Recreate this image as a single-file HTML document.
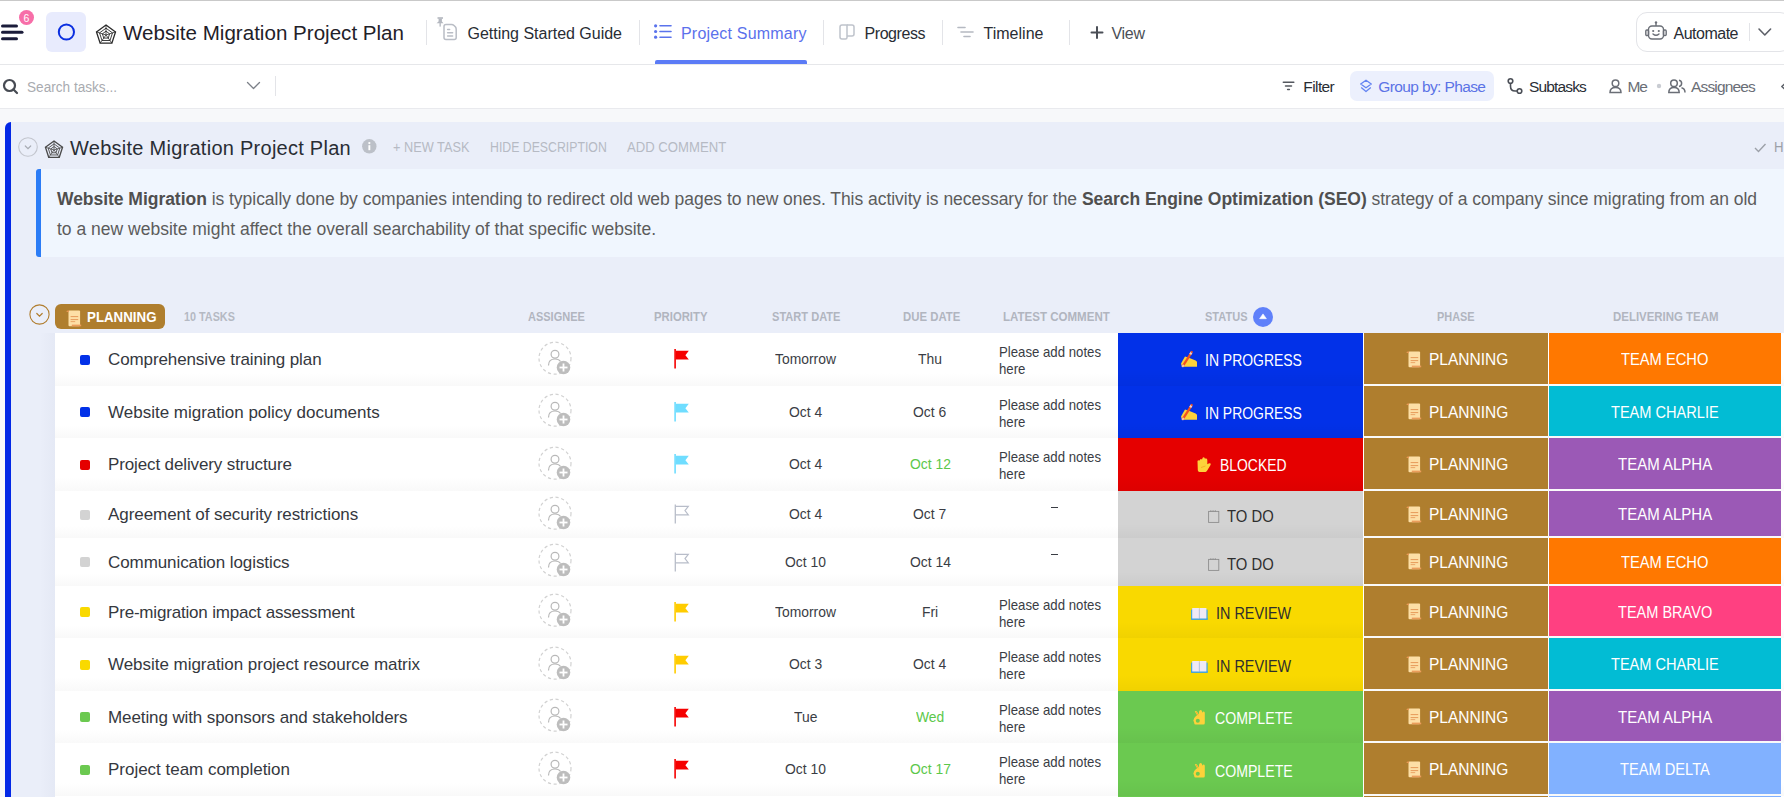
<!DOCTYPE html>
<html><head><meta charset="utf-8"><title>Website Migration Project Plan</title>
<style>
html,body{margin:0;padding:0;}
body{width:1784px;height:797px;overflow:hidden;position:relative;background:#fff;font-family:"Liberation Sans", sans-serif;}
svg{overflow:visible}
</style></head><body>
<div style="position:absolute;left:0px;top:0px;width:1784px;height:1px;background:#c9c9c9;"></div>
<div style="position:absolute;left:0px;top:64px;width:1784px;height:1px;background:#e6e7ea;"></div>
<svg style="position:absolute;left:0px;top:18px;" width="26" height="26" viewBox="0 0 26 26"><g stroke="#1b1c3a" stroke-width="3" stroke-linecap="round">
<line x1="2.5" y1="8" x2="16.5" y2="8"/><line x1="2.5" y1="14.2" x2="22" y2="14.2"/><line x1="2.5" y1="20.8" x2="16.5" y2="20.8"/></g></svg>
<svg style="position:absolute;left:19px;top:10px;" width="16" height="16" viewBox="0 0 16 16"><circle cx="7.5" cy="7.5" r="7.5" fill="#f76ea8"/><text x="7.5" y="11.5" font-size="10.5" font-family="Liberation Sans" fill="#fff" text-anchor="middle">6</text></svg>
<div style="position:absolute;left:46px;top:12px;width:40px;height:40px;background:#e8ebfd;border-radius:6px;"></div>
<svg style="position:absolute;left:57px;top:23px;" width="19" height="19" viewBox="0 0 19 19"><circle cx="9.4" cy="9" r="7.6" fill="none" stroke="#0a2ee0" stroke-width="2"/></svg>
<svg style="position:absolute;left:96px;top:23.5px;" width="20" height="22" viewBox="0 0 20 22"><polygon points="10.00,1.00 19.51,7.91 15.88,19.09 4.12,19.09 0.49,7.91" fill="none" stroke="#2a2a2a" stroke-width="1.3"/><polygon points="10.00,4.20 16.47,8.90 14.00,16.50 6.00,16.50 3.53,8.90" fill="none" stroke="#2a2a2a" stroke-width="0.9"/><polygon points="10.00,7.20 13.61,9.83 12.23,14.07 7.77,14.07 6.39,9.83" fill="none" stroke="#2a2a2a" stroke-width="0.9"/><line x1="10.0" y1="11.0" x2="10.00" y2="1.00" stroke="#2a2a2a" stroke-width="0.8"/><line x1="10.0" y1="11.0" x2="19.51" y2="7.91" stroke="#2a2a2a" stroke-width="0.8"/><line x1="10.0" y1="11.0" x2="15.88" y2="19.09" stroke="#2a2a2a" stroke-width="0.8"/><line x1="10.0" y1="11.0" x2="4.12" y2="19.09" stroke="#2a2a2a" stroke-width="0.8"/><line x1="10.0" y1="11.0" x2="0.49" y2="7.91" stroke="#2a2a2a" stroke-width="0.8"/></svg>
<div style="position:absolute;left:426px;top:20px;width:1px;height:25px;background:#e3e4e8;"></div>
<div style="position:absolute;left:639px;top:20px;width:1px;height:25px;background:#e3e4e8;"></div>
<div style="position:absolute;left:823px;top:20px;width:1px;height:25px;background:#e3e4e8;"></div>
<div style="position:absolute;left:942px;top:20px;width:1px;height:25px;background:#e3e4e8;"></div>
<div style="position:absolute;left:1069px;top:20px;width:1px;height:25px;background:#e3e4e8;"></div>
<svg style="position:absolute;left:436px;top:17px;" width="22" height="24" viewBox="0 0 22 24"><g fill="none" stroke="#b9bdc5" stroke-width="1.5" stroke-linecap="round">
<path d="M10 7.5 H15.5 Q17 7.5 18 8.5 L19.5 10 Q20.2 11 20.2 12.5 V20.5 Q20.2 22.5 18.2 22.5 H10 Q8 22.5 8 20.5 V9.5 Q8 7.5 10 7.5 Z"/>
<line x1="11.6" y1="12.4" x2="13.6" y2="12.4"/><line x1="11.6" y1="15.7" x2="16.6" y2="15.7"/><line x1="11.6" y1="19" x2="16.6" y2="19"/></g>
<g fill="#b3b7bf"><rect x="1.5" y="0.2" width="5.5" height="1.6"/><rect x="2.6" y="1.5" width="3.3" height="3.5"/><path d="M0.5 6.3 L2.6 4.5 H5.9 L7.5 6.3 Z"/><rect x="3.5" y="6" width="1.3" height="3.6"/></g></svg>
<svg style="position:absolute;left:654px;top:24px;" width="19" height="16" viewBox="0 0 19 16"><g fill="#5a73ec"><circle cx="1.6" cy="1.8" r="1.6"/><circle cx="1.6" cy="7.5" r="1.6"/><circle cx="1.6" cy="13.2" r="1.6"/></g>
<g stroke="#5a73ec" stroke-width="1.6" stroke-linecap="round"><line x1="6" y1="1.8" x2="17" y2="1.8"/><line x1="6" y1="7.5" x2="17" y2="7.5"/><line x1="6" y1="13.2" x2="17" y2="13.2"/></g></svg>
<div style="position:absolute;left:655px;top:60px;width:152px;height:4px;background:#5b7bf6;border-radius:2px 2px 0 0;"></div>
<svg style="position:absolute;left:839px;top:24px;" width="17" height="17" viewBox="0 0 17 17"><g fill="none" stroke="#bfc3cb" stroke-width="1.5"><path d="M3 1 H8 V13.5 Q8 15 6.5 15 H3 Q1 15 1 13 V3 Q1 1 3 1 Z"/><path d="M8 1 H13 Q15 1 15 3 V10 Q15 12 13 12 H8"/></g></svg>
<svg style="position:absolute;left:957px;top:26px;" width="18" height="13" viewBox="0 0 18 13"><g stroke="#b5b9c1" stroke-width="1.6" stroke-linecap="round"><line x1="1" y1="1.5" x2="8" y2="1.5"/><line x1="4" y1="6" x2="16" y2="6"/><line x1="7" y1="10.5" x2="13" y2="10.5"/></g></svg>
<svg style="position:absolute;left:1090px;top:26px;" width="14" height="14" viewBox="0 0 14 14"><g stroke="#4b4f57" stroke-width="2" stroke-linecap="round"><line x1="7" y1="1" x2="7" y2="12"/><line x1="1.5" y1="6.5" x2="12.5" y2="6.5"/></g></svg>
<div style="position:absolute;left:1635.5px;top:12px;width:155px;height:39.5px;background:#fff;border:1px solid #e3e4e8;border-radius:11px;box-sizing:border-box;"></div>
<svg style="position:absolute;left:1645px;top:21px;" width="22" height="20" viewBox="0 0 22 20"><g fill="none" stroke="#6b6f77" stroke-width="1.4">
<rect x="3.5" y="5" width="15" height="13" rx="3.5"/><line x1="11" y1="2" x2="11" y2="5"/><rect x="0.8" y="9" width="2.7" height="5.5" rx="1"/><rect x="18.5" y="9" width="2.7" height="5.5" rx="1"/>
<path d="M8 13 q3 2.6 6 0" stroke-linecap="round"/></g><g fill="#6b6f77"><circle cx="11" cy="1.4" r="1.2"/><circle cx="8.2" cy="10" r="1.1"/><circle cx="13.8" cy="10" r="1.1"/></g></svg>
<div style="position:absolute;left:1749px;top:23px;width:1px;height:18px;background:#e3e4e8;"></div>
<svg style="position:absolute;left:1758px;top:28px;" width="14" height="9" viewBox="0 0 14 9"><path d="M1 1 L6.8 7 L12.6 1" fill="none" stroke="#5d6068" stroke-width="1.6" stroke-linecap="round" stroke-linejoin="round"/></svg>
<div style="position:absolute;left:0px;top:108px;width:1784px;height:1px;background:#e9eaee;"></div>
<svg style="position:absolute;left:2px;top:78px;" width="17" height="17" viewBox="0 0 17 17"><g fill="none" stroke="#474b53" stroke-width="2.2"><circle cx="7.5" cy="7.5" r="5.5"/><line x1="11.5" y1="11.5" x2="15" y2="15" stroke-linecap="round"/></g></svg>
<svg style="position:absolute;left:246px;top:81px;" width="15" height="10" viewBox="0 0 15 10"><path d="M1.5 1.5 L7.5 7.5 L13.5 1.5" fill="none" stroke="#7c8088" stroke-width="1.3" stroke-linecap="round" stroke-linejoin="round"/></svg>
<div style="position:absolute;left:275px;top:76px;width:1px;height:20px;background:#e3e4e8;"></div>
<svg style="position:absolute;left:1282px;top:80px;" width="13" height="12" viewBox="0 0 13 12"><g stroke="#54585f" stroke-width="1.5" stroke-linecap="round"><line x1="1.3" y1="2.3" x2="11.8" y2="2.3"/><line x1="3.5" y1="6" x2="9.5" y2="6"/><line x1="5.6" y1="9.6" x2="7.4" y2="9.6"/></g></svg>
<div style="position:absolute;left:1350px;top:71px;width:144px;height:30px;background:#ecf0fd;border-radius:7px;"></div>
<svg style="position:absolute;left:1359px;top:79px;" width="14" height="15" viewBox="0 0 14 15"><g fill="none" stroke="#6484f2" stroke-width="1.3" stroke-linejoin="round"><path d="M7 1.2 L12.3 5 L7 8.8 L1.7 5 Z"/><path d="M2.2 8.6 L7 12.6 L11.8 8.6"/></g></svg>
<svg style="position:absolute;left:1507px;top:78px;" width="17" height="17" viewBox="0 0 17 17"><g fill="none" stroke="#4b4f57" stroke-width="1.6"><circle cx="3.5" cy="3" r="2.3"/><circle cx="12.5" cy="13" r="2.3"/><path d="M3.5 5.3 v3 q0 4.7 4.7 4.7 h2"/></g></svg>
<svg style="position:absolute;left:1609px;top:79px;" width="13" height="15" viewBox="0 0 13 15"><g fill="none" stroke="#6a6e76" stroke-width="1.5"><circle cx="6.5" cy="4.3" r="3.3"/><path d="M1 13.5 q0 -5 5.5 -5 q5.5 0 5.5 5 z"/></g></svg>
<svg style="position:absolute;left:1655.5px;top:83px;" width="6" height="6" viewBox="0 0 6 6"><circle cx="3" cy="3" r="2.2" fill="#c9ccd2"/></svg>
<svg style="position:absolute;left:1668px;top:79px;" width="18" height="15" viewBox="0 0 18 15"><g fill="none" stroke="#6a6e76" stroke-width="1.5"><circle cx="6" cy="4.3" r="3.3"/><path d="M0.8 13.5 q0 -5 5.2 -5 q5.2 0 5.2 5 z"/><path d="M11 1.2 a3.2 3.2 0 0 1 0 6.3 M13.5 8.8 q3.5 0.8 3.5 4.7"/></g></svg>
<svg style="position:absolute;left:1780px;top:82px;" width="8" height="10" viewBox="0 0 8 10"><path d="M5.5 1 L1.8 4.5 L5.5 8" fill="none" stroke="#5d6168" stroke-width="1.5" stroke-linejoin="round"/></svg>
<div style="position:absolute;left:0px;top:109px;width:1784px;height:688px;background:#f7f8fa;"></div>
<div style="position:absolute;left:5px;top:122px;width:1779px;height:675px;background:#eaeef9;border-top-left-radius:6px;"></div>
<div style="position:absolute;left:5px;top:122px;width:6px;height:675px;background:#0328e6;border-top-left-radius:6px;"></div>
<svg style="position:absolute;left:18px;top:137px;" width="21" height="21" viewBox="0 0 21 21"><circle cx="10" cy="10" r="9.3" fill="none" stroke="#c3c6ce" stroke-width="1.1"/><path d="M7.3 9 L10 11.6 L12.7 9" fill="none" stroke="#a8acb4" stroke-width="1.2" stroke-linecap="round"/></svg>
<svg style="position:absolute;left:45px;top:139.5px;" width="18" height="20" viewBox="0 0 18 20"><polygon points="9.00,1.00 17.56,7.22 14.29,17.28 3.71,17.28 0.44,7.22" fill="none" stroke="#4a4a4a" stroke-width="1.3"/><polygon points="9.00,3.88 14.82,8.11 12.60,14.95 5.40,14.95 3.18,8.11" fill="none" stroke="#4a4a4a" stroke-width="0.9"/><polygon points="9.00,6.58 12.25,8.94 11.01,12.77 6.99,12.77 5.75,8.94" fill="none" stroke="#4a4a4a" stroke-width="0.9"/><line x1="9.0" y1="10.0" x2="9.00" y2="1.00" stroke="#4a4a4a" stroke-width="0.8"/><line x1="9.0" y1="10.0" x2="17.56" y2="7.22" stroke="#4a4a4a" stroke-width="0.8"/><line x1="9.0" y1="10.0" x2="14.29" y2="17.28" stroke="#4a4a4a" stroke-width="0.8"/><line x1="9.0" y1="10.0" x2="3.71" y2="17.28" stroke="#4a4a4a" stroke-width="0.8"/><line x1="9.0" y1="10.0" x2="0.44" y2="7.22" stroke="#4a4a4a" stroke-width="0.8"/></svg>
<svg style="position:absolute;left:362px;top:139px;" width="15" height="15" viewBox="0 0 15 15"><circle cx="7.3" cy="7.3" r="7.2" fill="#bcc0c8"/><rect x="6.4" y="6.2" width="1.9" height="5" fill="#fff"/><circle cx="7.35" cy="4.1" r="1.15" fill="#fff"/></svg>
<svg style="position:absolute;left:1754px;top:143px;" width="13" height="10" viewBox="0 0 13 10"><path d="M1 5 L4.5 8.5 L11.5 1" fill="none" stroke="#9ca0a8" stroke-width="1.4"/></svg>
<div style="position:absolute;left:36px;top:169px;width:1748px;height:88px;background:#f0f6fe;border-radius:3px 0 0 3px;"></div>
<div style="position:absolute;left:36px;top:169px;width:5px;height:88px;background:#2b7cf6;border-radius:3px 0 0 3px;"></div>
<svg style="position:absolute;left:29px;top:304.3px;" width="22" height="22" viewBox="0 0 22 22"><circle cx="10.5" cy="10.5" r="9.6" fill="none" stroke="#b07d2e" stroke-width="1.1"/><path d="M7.8 9.5 L10.5 12.2 L13.2 9.5" fill="none" stroke="#b07d2e" stroke-width="1.2" stroke-linecap="round"/></svg>
<div style="position:absolute;left:55px;top:304px;width:110px;height:24.5px;background:#af7e2e;border-radius:6px;"></div>
<svg style="position:absolute;left:65.5px;top:309.5px;" width="16" height="17" viewBox="0 0 16 17"><rect x="2.5" y="0.6" width="11.6" height="15.6" rx="1" fill="#fddfa6"/><path d="M0.2 1.6 Q1.2 0.2 2.8 0.6 V2.2 Z" fill="#ee9a58"/><rect x="5.8" y="14.6" width="9.4" height="1.7" fill="#eb9d5c"/><g fill="#e8a060"><rect x="4.6" y="6" width="7.6" height="1.1"/><rect x="4.6" y="9" width="7.6" height="1.1"/><rect x="4.6" y="11.2" width="4.6" height="0.9"/></g></svg>
<svg style="position:absolute;left:1253px;top:306.5px;" width="21" height="21" viewBox="0 0 21 21"><circle cx="10" cy="10" r="10" fill="#5f80fa"/><path d="M6.6 11.7 L10 6.9 L13.4 11.7 Z" fill="#fff" stroke="#fff" stroke-width="0.6" stroke-linejoin="round"/></svg>
<div style="position:absolute;left:40px;top:333px;width:15px;height:464px;background:linear-gradient(to right, rgba(60,70,120,0) 0%, rgba(60,70,120,0.03) 100%);"></div>
<div style="position:absolute;left:55px;top:333px;width:1729px;height:53px;background:linear-gradient(#fff 0%, #fff 75%, #f9f9f9 100%);"></div>
<div style="position:absolute;left:80px;top:354.5px;width:10px;height:10px;background:#0231e8;border-radius:2px;"></div>
<svg style="position:absolute;left:538px;top:340.5px;" width="36" height="36" viewBox="0 0 36 36"><circle cx="17" cy="17.2" r="16" fill="none" stroke="#d2d2d2" stroke-width="1.2" stroke-dasharray="3.2 2.6"/>
<circle cx="17" cy="13.2" r="3.9" fill="none" stroke="#b8b8b8" stroke-width="1.2"/>
<path d="M10.5 24.5 q0 -6.5 6.5 -6.5 q4 0 5.5 2.5" fill="none" stroke="#b8b8b8" stroke-width="1.2"/>
<circle cx="25.5" cy="26.5" r="6.8" fill="#bdbdbd"/><g stroke="#fff" stroke-width="1.8"><line x1="25.5" y1="22.5" x2="25.5" y2="30.5"/><line x1="21.5" y1="26.5" x2="29.5" y2="26.5"/></g></svg>
<svg style="position:absolute;left:673.5px;top:349.0px;" width="16" height="21" viewBox="0 0 16 21"><rect x="0.3" y="0" width="1.6" height="19.5" fill="#f50000"/><path d="M1.8 1.8 H14.8 L11.4 6.2 L14.8 10.6 H1.8 Z" fill="#f50000"/></svg>
<div style="position:absolute;left:1118px;top:333px;width:245px;height:53px;background:linear-gradient(rgba(0,0,0,0) 70%, rgba(0,0,0,0.035) 100%), #0231e8;"></div>
<div style="position:absolute;left:1364px;top:333px;width:184px;height:51px;background:#af7e2e;"></div>
<div style="position:absolute;left:1549px;top:333px;width:232px;height:51px;background:#ff7800;"></div>
<svg style="position:absolute;left:1176px;top:348.0px;" width="23" height="20" viewBox="0 0 23 20"><path d="M5 15.4 L9 8.4 L13.5 10 L19.6 12.6 L21 13.8 V18.8 H6 Z" fill="#fdd23a"/><path d="M6.8 18.2 L14.8 5.6" stroke="#f4511e" stroke-width="2.3" stroke-linecap="butt"/><path d="M14.2 6.4 L15.6 4.2" stroke="#f1d2c8" stroke-width="2.3"/><path d="M15.3 4.6 L16.2 3.3" stroke="#f4511e" stroke-width="2"/><path d="M6.2 18.8 l1.6 -2" stroke="#f6c4b0" stroke-width="2"/></svg>
<svg style="position:absolute;left:1406px;top:350.6px;" width="16" height="17" viewBox="0 0 16 17"><rect x="2.5" y="0.6" width="11.6" height="15.6" rx="1" fill="#fddfa6"/><path d="M0.2 1.6 Q1.2 0.2 2.8 0.6 V2.2 Z" fill="#ee9a58"/><rect x="5.8" y="14.6" width="9.4" height="1.7" fill="#eb9d5c"/><g fill="#e8a060"><rect x="4.6" y="6" width="7.6" height="1.1"/><rect x="4.6" y="9" width="7.6" height="1.1"/><rect x="4.6" y="11.2" width="4.6" height="0.9"/></g></svg>
<div style="position:absolute;left:55px;top:386px;width:1729px;height:52px;background:linear-gradient(#fff 0%, #fff 75%, #f9f9f9 100%);"></div>
<div style="position:absolute;left:80px;top:407.0px;width:10px;height:10px;background:#0231e8;border-radius:2px;"></div>
<svg style="position:absolute;left:538px;top:393.0px;" width="36" height="36" viewBox="0 0 36 36"><circle cx="17" cy="17.2" r="16" fill="none" stroke="#d2d2d2" stroke-width="1.2" stroke-dasharray="3.2 2.6"/>
<circle cx="17" cy="13.2" r="3.9" fill="none" stroke="#b8b8b8" stroke-width="1.2"/>
<path d="M10.5 24.5 q0 -6.5 6.5 -6.5 q4 0 5.5 2.5" fill="none" stroke="#b8b8b8" stroke-width="1.2"/>
<circle cx="25.5" cy="26.5" r="6.8" fill="#bdbdbd"/><g stroke="#fff" stroke-width="1.8"><line x1="25.5" y1="22.5" x2="25.5" y2="30.5"/><line x1="21.5" y1="26.5" x2="29.5" y2="26.5"/></g></svg>
<svg style="position:absolute;left:673.5px;top:401.5px;" width="16" height="21" viewBox="0 0 16 21"><rect x="0.3" y="0" width="1.6" height="19.5" fill="#6fddff"/><path d="M1.8 1.8 H14.8 L11.4 6.2 L14.8 10.6 H1.8 Z" fill="#6fddff"/></svg>
<div style="position:absolute;left:1118px;top:386px;width:245px;height:52px;background:linear-gradient(rgba(0,0,0,0) 70%, rgba(0,0,0,0.035) 100%), #0231e8;"></div>
<div style="position:absolute;left:1364px;top:386px;width:184px;height:50px;background:#af7e2e;"></div>
<div style="position:absolute;left:1549px;top:386px;width:232px;height:50px;background:#02bcd4;"></div>
<svg style="position:absolute;left:1176px;top:400.5px;" width="23" height="20" viewBox="0 0 23 20"><path d="M5 15.4 L9 8.4 L13.5 10 L19.6 12.6 L21 13.8 V18.8 H6 Z" fill="#fdd23a"/><path d="M6.8 18.2 L14.8 5.6" stroke="#f4511e" stroke-width="2.3" stroke-linecap="butt"/><path d="M14.2 6.4 L15.6 4.2" stroke="#f1d2c8" stroke-width="2.3"/><path d="M15.3 4.6 L16.2 3.3" stroke="#f4511e" stroke-width="2"/><path d="M6.2 18.8 l1.6 -2" stroke="#f6c4b0" stroke-width="2"/></svg>
<svg style="position:absolute;left:1406px;top:403.1px;" width="16" height="17" viewBox="0 0 16 17"><rect x="2.5" y="0.6" width="11.6" height="15.6" rx="1" fill="#fddfa6"/><path d="M0.2 1.6 Q1.2 0.2 2.8 0.6 V2.2 Z" fill="#ee9a58"/><rect x="5.8" y="14.6" width="9.4" height="1.7" fill="#eb9d5c"/><g fill="#e8a060"><rect x="4.6" y="6" width="7.6" height="1.1"/><rect x="4.6" y="9" width="7.6" height="1.1"/><rect x="4.6" y="11.2" width="4.6" height="0.9"/></g></svg>
<div style="position:absolute;left:55px;top:438px;width:1729px;height:53px;background:linear-gradient(#fff 0%, #fff 75%, #f9f9f9 100%);"></div>
<div style="position:absolute;left:80px;top:459.5px;width:10px;height:10px;background:#e50000;border-radius:2px;"></div>
<svg style="position:absolute;left:538px;top:445.5px;" width="36" height="36" viewBox="0 0 36 36"><circle cx="17" cy="17.2" r="16" fill="none" stroke="#d2d2d2" stroke-width="1.2" stroke-dasharray="3.2 2.6"/>
<circle cx="17" cy="13.2" r="3.9" fill="none" stroke="#b8b8b8" stroke-width="1.2"/>
<path d="M10.5 24.5 q0 -6.5 6.5 -6.5 q4 0 5.5 2.5" fill="none" stroke="#b8b8b8" stroke-width="1.2"/>
<circle cx="25.5" cy="26.5" r="6.8" fill="#bdbdbd"/><g stroke="#fff" stroke-width="1.8"><line x1="25.5" y1="22.5" x2="25.5" y2="30.5"/><line x1="21.5" y1="26.5" x2="29.5" y2="26.5"/></g></svg>
<svg style="position:absolute;left:673.5px;top:454.0px;" width="16" height="21" viewBox="0 0 16 21"><rect x="0.3" y="0" width="1.6" height="19.5" fill="#6fddff"/><path d="M1.8 1.8 H14.8 L11.4 6.2 L14.8 10.6 H1.8 Z" fill="#6fddff"/></svg>
<div style="position:absolute;left:1118px;top:438px;width:245px;height:53px;background:linear-gradient(rgba(0,0,0,0) 70%, rgba(0,0,0,0.035) 100%), #e50000;"></div>
<div style="position:absolute;left:1364px;top:438px;width:184px;height:51px;background:#af7e2e;"></div>
<div style="position:absolute;left:1549px;top:438px;width:232px;height:51px;background:#9b59b6;"></div>
<svg style="position:absolute;left:1192px;top:452.0px;" width="24" height="24" viewBox="0 0 24 24"><path d="M5.5 9 Q6 8.2 6.8 8.4 L7.6 8.6 Q8 6.9 8.9 6.9 Q9.7 6.9 10 7.5 Q10.6 5.3 11.5 5.3 Q12.5 5.3 12.8 6.6 Q13.3 6.4 14.3 6.6 Q15.3 7 15.3 8 V12.2 L16.6 11.6 Q17.8 11 18.6 11.6 Q19 12.2 18.4 13.2 L15.2 18.5 Q14.5 19.9 13.5 19.9 H7.5 Q6 19.9 5.8 18.3 Z" fill="#fdd23a"/><path d="M9 15.5 L13.5 14" stroke="#f5a623" stroke-width="0.8" fill="none"/></svg>
<svg style="position:absolute;left:1406px;top:455.6px;" width="16" height="17" viewBox="0 0 16 17"><rect x="2.5" y="0.6" width="11.6" height="15.6" rx="1" fill="#fddfa6"/><path d="M0.2 1.6 Q1.2 0.2 2.8 0.6 V2.2 Z" fill="#ee9a58"/><rect x="5.8" y="14.6" width="9.4" height="1.7" fill="#eb9d5c"/><g fill="#e8a060"><rect x="4.6" y="6" width="7.6" height="1.1"/><rect x="4.6" y="9" width="7.6" height="1.1"/><rect x="4.6" y="11.2" width="4.6" height="0.9"/></g></svg>
<div style="position:absolute;left:55px;top:491px;width:1729px;height:47px;background:linear-gradient(#fff 0%, #fff 75%, #f9f9f9 100%);"></div>
<div style="position:absolute;left:80px;top:509.5px;width:10px;height:10px;background:#d3d3d3;border-radius:2px;"></div>
<svg style="position:absolute;left:538px;top:495.5px;" width="36" height="36" viewBox="0 0 36 36"><circle cx="17" cy="17.2" r="16" fill="none" stroke="#d2d2d2" stroke-width="1.2" stroke-dasharray="3.2 2.6"/>
<circle cx="17" cy="13.2" r="3.9" fill="none" stroke="#b8b8b8" stroke-width="1.2"/>
<path d="M10.5 24.5 q0 -6.5 6.5 -6.5 q4 0 5.5 2.5" fill="none" stroke="#b8b8b8" stroke-width="1.2"/>
<circle cx="25.5" cy="26.5" r="6.8" fill="#bdbdbd"/><g stroke="#fff" stroke-width="1.8"><line x1="25.5" y1="22.5" x2="25.5" y2="30.5"/><line x1="21.5" y1="26.5" x2="29.5" y2="26.5"/></g></svg>
<svg style="position:absolute;left:673.5px;top:504.0px;" width="16" height="21" viewBox="0 0 16 21"><path d="M1.3 0.5 V19.5" stroke="#b8bdc9" stroke-width="1.3"/><path d="M1.3 2.3 H14.3 L11 6.6 L14.3 10.9 H1.3" fill="none" stroke="#b8bdc9" stroke-width="1.2"/></svg>
<div style="position:absolute;left:1051px;top:507px;width:7px;height:1.2px;background:#3a3d44;"></div>
<div style="position:absolute;left:1118px;top:491px;width:245px;height:47px;background:linear-gradient(rgba(0,0,0,0) 70%, rgba(0,0,0,0.035) 100%), #d3d3d3;"></div>
<div style="position:absolute;left:1364px;top:491px;width:184px;height:45px;background:#af7e2e;"></div>
<div style="position:absolute;left:1549px;top:491px;width:232px;height:45px;background:#9b59b6;"></div>
<svg style="position:absolute;left:1207.5px;top:510.3px;" width="12" height="13" viewBox="0 0 12 13"><rect x="0.6" y="1.4" width="10.2" height="11" fill="none" stroke="#8d8d8d" stroke-width="0.9"/><g fill="#8d8d8d"><rect x="2.4" y="0.2" width="0.9" height="1.8"/><rect x="4.6" y="0.2" width="0.9" height="1.8"/><rect x="6.8" y="0.2" width="0.9" height="1.8"/></g></svg>
<svg style="position:absolute;left:1406px;top:505.6px;" width="16" height="17" viewBox="0 0 16 17"><rect x="2.5" y="0.6" width="11.6" height="15.6" rx="1" fill="#fddfa6"/><path d="M0.2 1.6 Q1.2 0.2 2.8 0.6 V2.2 Z" fill="#ee9a58"/><rect x="5.8" y="14.6" width="9.4" height="1.7" fill="#eb9d5c"/><g fill="#e8a060"><rect x="4.6" y="6" width="7.6" height="1.1"/><rect x="4.6" y="9" width="7.6" height="1.1"/><rect x="4.6" y="11.2" width="4.6" height="0.9"/></g></svg>
<div style="position:absolute;left:55px;top:538px;width:1729px;height:48px;background:linear-gradient(#fff 0%, #fff 75%, #f9f9f9 100%);"></div>
<div style="position:absolute;left:80px;top:557.0px;width:10px;height:10px;background:#d3d3d3;border-radius:2px;"></div>
<svg style="position:absolute;left:538px;top:543.0px;" width="36" height="36" viewBox="0 0 36 36"><circle cx="17" cy="17.2" r="16" fill="none" stroke="#d2d2d2" stroke-width="1.2" stroke-dasharray="3.2 2.6"/>
<circle cx="17" cy="13.2" r="3.9" fill="none" stroke="#b8b8b8" stroke-width="1.2"/>
<path d="M10.5 24.5 q0 -6.5 6.5 -6.5 q4 0 5.5 2.5" fill="none" stroke="#b8b8b8" stroke-width="1.2"/>
<circle cx="25.5" cy="26.5" r="6.8" fill="#bdbdbd"/><g stroke="#fff" stroke-width="1.8"><line x1="25.5" y1="22.5" x2="25.5" y2="30.5"/><line x1="21.5" y1="26.5" x2="29.5" y2="26.5"/></g></svg>
<svg style="position:absolute;left:673.5px;top:551.5px;" width="16" height="21" viewBox="0 0 16 21"><path d="M1.3 0.5 V19.5" stroke="#b8bdc9" stroke-width="1.3"/><path d="M1.3 2.3 H14.3 L11 6.6 L14.3 10.9 H1.3" fill="none" stroke="#b8bdc9" stroke-width="1.2"/></svg>
<div style="position:absolute;left:1051px;top:554px;width:7px;height:1.2px;background:#3a3d44;"></div>
<div style="position:absolute;left:1118px;top:538px;width:245px;height:48px;background:linear-gradient(rgba(0,0,0,0) 70%, rgba(0,0,0,0.035) 100%), #d3d3d3;"></div>
<div style="position:absolute;left:1364px;top:538px;width:184px;height:46px;background:#af7e2e;"></div>
<div style="position:absolute;left:1549px;top:538px;width:232px;height:46px;background:#ff7800;"></div>
<svg style="position:absolute;left:1207.5px;top:557.8px;" width="12" height="13" viewBox="0 0 12 13"><rect x="0.6" y="1.4" width="10.2" height="11" fill="none" stroke="#8d8d8d" stroke-width="0.9"/><g fill="#8d8d8d"><rect x="2.4" y="0.2" width="0.9" height="1.8"/><rect x="4.6" y="0.2" width="0.9" height="1.8"/><rect x="6.8" y="0.2" width="0.9" height="1.8"/></g></svg>
<svg style="position:absolute;left:1406px;top:553.1px;" width="16" height="17" viewBox="0 0 16 17"><rect x="2.5" y="0.6" width="11.6" height="15.6" rx="1" fill="#fddfa6"/><path d="M0.2 1.6 Q1.2 0.2 2.8 0.6 V2.2 Z" fill="#ee9a58"/><rect x="5.8" y="14.6" width="9.4" height="1.7" fill="#eb9d5c"/><g fill="#e8a060"><rect x="4.6" y="6" width="7.6" height="1.1"/><rect x="4.6" y="9" width="7.6" height="1.1"/><rect x="4.6" y="11.2" width="4.6" height="0.9"/></g></svg>
<div style="position:absolute;left:55px;top:586px;width:1729px;height:52px;background:linear-gradient(#fff 0%, #fff 75%, #f9f9f9 100%);"></div>
<div style="position:absolute;left:80px;top:607.0px;width:10px;height:10px;background:#f9d900;border-radius:2px;"></div>
<svg style="position:absolute;left:538px;top:593.0px;" width="36" height="36" viewBox="0 0 36 36"><circle cx="17" cy="17.2" r="16" fill="none" stroke="#d2d2d2" stroke-width="1.2" stroke-dasharray="3.2 2.6"/>
<circle cx="17" cy="13.2" r="3.9" fill="none" stroke="#b8b8b8" stroke-width="1.2"/>
<path d="M10.5 24.5 q0 -6.5 6.5 -6.5 q4 0 5.5 2.5" fill="none" stroke="#b8b8b8" stroke-width="1.2"/>
<circle cx="25.5" cy="26.5" r="6.8" fill="#bdbdbd"/><g stroke="#fff" stroke-width="1.8"><line x1="25.5" y1="22.5" x2="25.5" y2="30.5"/><line x1="21.5" y1="26.5" x2="29.5" y2="26.5"/></g></svg>
<svg style="position:absolute;left:673.5px;top:601.5px;" width="16" height="21" viewBox="0 0 16 21"><rect x="0.3" y="0" width="1.6" height="19.5" fill="#ffcc00"/><path d="M1.8 1.8 H14.8 L11.4 6.2 L14.8 10.6 H1.8 Z" fill="#ffcc00"/></svg>
<div style="position:absolute;left:1118px;top:586px;width:245px;height:52px;background:linear-gradient(rgba(0,0,0,0) 70%, rgba(0,0,0,0.035) 100%), #f9d900;"></div>
<div style="position:absolute;left:1364px;top:586px;width:184px;height:50px;background:#af7e2e;"></div>
<div style="position:absolute;left:1549px;top:586px;width:232px;height:50px;background:#ff4081;"></div>
<svg style="position:absolute;left:1191px;top:608.2px;" width="18" height="13" viewBox="0 0 18 13"><rect x="0" y="1.6" width="16.7" height="10.1" fill="#4aa8d8"/><rect x="0" y="10.2" width="16.7" height="1.5" fill="#3a9fe8"/><path d="M1.2 0 H8.2 V10.6 H1.2 Z M8.6 0 H15.4 V10.6 H8.6 Z" fill="#efe9f6"/><path d="M8.2 0.5 V10.6" stroke="#c9b8d6" stroke-width="0.6"/></svg>
<svg style="position:absolute;left:1406px;top:603.1px;" width="16" height="17" viewBox="0 0 16 17"><rect x="2.5" y="0.6" width="11.6" height="15.6" rx="1" fill="#fddfa6"/><path d="M0.2 1.6 Q1.2 0.2 2.8 0.6 V2.2 Z" fill="#ee9a58"/><rect x="5.8" y="14.6" width="9.4" height="1.7" fill="#eb9d5c"/><g fill="#e8a060"><rect x="4.6" y="6" width="7.6" height="1.1"/><rect x="4.6" y="9" width="7.6" height="1.1"/><rect x="4.6" y="11.2" width="4.6" height="0.9"/></g></svg>
<div style="position:absolute;left:55px;top:638px;width:1729px;height:53px;background:linear-gradient(#fff 0%, #fff 75%, #f9f9f9 100%);"></div>
<div style="position:absolute;left:80px;top:659.5px;width:10px;height:10px;background:#f9d900;border-radius:2px;"></div>
<svg style="position:absolute;left:538px;top:645.5px;" width="36" height="36" viewBox="0 0 36 36"><circle cx="17" cy="17.2" r="16" fill="none" stroke="#d2d2d2" stroke-width="1.2" stroke-dasharray="3.2 2.6"/>
<circle cx="17" cy="13.2" r="3.9" fill="none" stroke="#b8b8b8" stroke-width="1.2"/>
<path d="M10.5 24.5 q0 -6.5 6.5 -6.5 q4 0 5.5 2.5" fill="none" stroke="#b8b8b8" stroke-width="1.2"/>
<circle cx="25.5" cy="26.5" r="6.8" fill="#bdbdbd"/><g stroke="#fff" stroke-width="1.8"><line x1="25.5" y1="22.5" x2="25.5" y2="30.5"/><line x1="21.5" y1="26.5" x2="29.5" y2="26.5"/></g></svg>
<svg style="position:absolute;left:673.5px;top:654.0px;" width="16" height="21" viewBox="0 0 16 21"><rect x="0.3" y="0" width="1.6" height="19.5" fill="#ffcc00"/><path d="M1.8 1.8 H14.8 L11.4 6.2 L14.8 10.6 H1.8 Z" fill="#ffcc00"/></svg>
<div style="position:absolute;left:1118px;top:638px;width:245px;height:53px;background:linear-gradient(rgba(0,0,0,0) 70%, rgba(0,0,0,0.035) 100%), #f9d900;"></div>
<div style="position:absolute;left:1364px;top:638px;width:184px;height:51px;background:#af7e2e;"></div>
<div style="position:absolute;left:1549px;top:638px;width:232px;height:51px;background:#02bcd4;"></div>
<svg style="position:absolute;left:1191px;top:660.7px;" width="18" height="13" viewBox="0 0 18 13"><rect x="0" y="1.6" width="16.7" height="10.1" fill="#4aa8d8"/><rect x="0" y="10.2" width="16.7" height="1.5" fill="#3a9fe8"/><path d="M1.2 0 H8.2 V10.6 H1.2 Z M8.6 0 H15.4 V10.6 H8.6 Z" fill="#efe9f6"/><path d="M8.2 0.5 V10.6" stroke="#c9b8d6" stroke-width="0.6"/></svg>
<svg style="position:absolute;left:1406px;top:655.6px;" width="16" height="17" viewBox="0 0 16 17"><rect x="2.5" y="0.6" width="11.6" height="15.6" rx="1" fill="#fddfa6"/><path d="M0.2 1.6 Q1.2 0.2 2.8 0.6 V2.2 Z" fill="#ee9a58"/><rect x="5.8" y="14.6" width="9.4" height="1.7" fill="#eb9d5c"/><g fill="#e8a060"><rect x="4.6" y="6" width="7.6" height="1.1"/><rect x="4.6" y="9" width="7.6" height="1.1"/><rect x="4.6" y="11.2" width="4.6" height="0.9"/></g></svg>
<div style="position:absolute;left:55px;top:691px;width:1729px;height:52px;background:linear-gradient(#fff 0%, #fff 75%, #f9f9f9 100%);"></div>
<div style="position:absolute;left:80px;top:712.0px;width:10px;height:10px;background:#6bc950;border-radius:2px;"></div>
<svg style="position:absolute;left:538px;top:698.0px;" width="36" height="36" viewBox="0 0 36 36"><circle cx="17" cy="17.2" r="16" fill="none" stroke="#d2d2d2" stroke-width="1.2" stroke-dasharray="3.2 2.6"/>
<circle cx="17" cy="13.2" r="3.9" fill="none" stroke="#b8b8b8" stroke-width="1.2"/>
<path d="M10.5 24.5 q0 -6.5 6.5 -6.5 q4 0 5.5 2.5" fill="none" stroke="#b8b8b8" stroke-width="1.2"/>
<circle cx="25.5" cy="26.5" r="6.8" fill="#bdbdbd"/><g stroke="#fff" stroke-width="1.8"><line x1="25.5" y1="22.5" x2="25.5" y2="30.5"/><line x1="21.5" y1="26.5" x2="29.5" y2="26.5"/></g></svg>
<svg style="position:absolute;left:673.5px;top:706.5px;" width="16" height="21" viewBox="0 0 16 21"><rect x="0.3" y="0" width="1.6" height="19.5" fill="#f50000"/><path d="M1.8 1.8 H14.8 L11.4 6.2 L14.8 10.6 H1.8 Z" fill="#f50000"/></svg>
<div style="position:absolute;left:1118px;top:691px;width:245px;height:52px;background:linear-gradient(rgba(0,0,0,0) 70%, rgba(0,0,0,0.035) 100%), #6bc950;"></div>
<div style="position:absolute;left:1364px;top:691px;width:184px;height:50px;background:#af7e2e;"></div>
<div style="position:absolute;left:1549px;top:691px;width:232px;height:50px;background:#9b59b6;"></div>
<svg style="position:absolute;left:1193px;top:710.0px;" width="14" height="17" viewBox="0 0 14 17"><path d="M1.8 1.6 Q2.8 0.4 3.9 1.4 L6 4.6 V1.7 Q6.5 0 7.6 0 Q8.6 0 9 1.3 L9.3 2.7 Q9.9 1.6 10.8 1.6 Q11.8 1.7 11.8 3 V13 Q11.8 14.5 10.5 14.5 H2.6 Q1.2 14.5 1.2 13 Q1.2 11.5 0.3 11 Q0.3 8 3 6 L4.1 5.3 Z" fill="#fdd23a"/><path d="M3.3 2 L5 5.3" stroke="#f0a830" stroke-width="0.9"/><circle cx="4.8" cy="10.7" r="2" fill="#6bc950"/></svg>
<svg style="position:absolute;left:1406px;top:708.1px;" width="16" height="17" viewBox="0 0 16 17"><rect x="2.5" y="0.6" width="11.6" height="15.6" rx="1" fill="#fddfa6"/><path d="M0.2 1.6 Q1.2 0.2 2.8 0.6 V2.2 Z" fill="#ee9a58"/><rect x="5.8" y="14.6" width="9.4" height="1.7" fill="#eb9d5c"/><g fill="#e8a060"><rect x="4.6" y="6" width="7.6" height="1.1"/><rect x="4.6" y="9" width="7.6" height="1.1"/><rect x="4.6" y="11.2" width="4.6" height="0.9"/></g></svg>
<div style="position:absolute;left:55px;top:743px;width:1729px;height:53px;background:linear-gradient(#fff 0%, #fff 75%, #f9f9f9 100%);"></div>
<div style="position:absolute;left:80px;top:764.5px;width:10px;height:10px;background:#6bc950;border-radius:2px;"></div>
<svg style="position:absolute;left:538px;top:750.5px;" width="36" height="36" viewBox="0 0 36 36"><circle cx="17" cy="17.2" r="16" fill="none" stroke="#d2d2d2" stroke-width="1.2" stroke-dasharray="3.2 2.6"/>
<circle cx="17" cy="13.2" r="3.9" fill="none" stroke="#b8b8b8" stroke-width="1.2"/>
<path d="M10.5 24.5 q0 -6.5 6.5 -6.5 q4 0 5.5 2.5" fill="none" stroke="#b8b8b8" stroke-width="1.2"/>
<circle cx="25.5" cy="26.5" r="6.8" fill="#bdbdbd"/><g stroke="#fff" stroke-width="1.8"><line x1="25.5" y1="22.5" x2="25.5" y2="30.5"/><line x1="21.5" y1="26.5" x2="29.5" y2="26.5"/></g></svg>
<svg style="position:absolute;left:673.5px;top:759.0px;" width="16" height="21" viewBox="0 0 16 21"><rect x="0.3" y="0" width="1.6" height="19.5" fill="#f50000"/><path d="M1.8 1.8 H14.8 L11.4 6.2 L14.8 10.6 H1.8 Z" fill="#f50000"/></svg>
<div style="position:absolute;left:1118px;top:743px;width:245px;height:53px;background:linear-gradient(rgba(0,0,0,0) 70%, rgba(0,0,0,0.035) 100%), #6bc950;"></div>
<div style="position:absolute;left:1364px;top:743px;width:184px;height:51px;background:#af7e2e;"></div>
<div style="position:absolute;left:1549px;top:743px;width:232px;height:51px;background:#81b1ff;"></div>
<svg style="position:absolute;left:1193px;top:762.5px;" width="14" height="17" viewBox="0 0 14 17"><path d="M1.8 1.6 Q2.8 0.4 3.9 1.4 L6 4.6 V1.7 Q6.5 0 7.6 0 Q8.6 0 9 1.3 L9.3 2.7 Q9.9 1.6 10.8 1.6 Q11.8 1.7 11.8 3 V13 Q11.8 14.5 10.5 14.5 H2.6 Q1.2 14.5 1.2 13 Q1.2 11.5 0.3 11 Q0.3 8 3 6 L4.1 5.3 Z" fill="#fdd23a"/><path d="M3.3 2 L5 5.3" stroke="#f0a830" stroke-width="0.9"/><circle cx="4.8" cy="10.7" r="2" fill="#6bc950"/></svg>
<svg style="position:absolute;left:1406px;top:760.6px;" width="16" height="17" viewBox="0 0 16 17"><rect x="2.5" y="0.6" width="11.6" height="15.6" rx="1" fill="#fddfa6"/><path d="M0.2 1.6 Q1.2 0.2 2.8 0.6 V2.2 Z" fill="#ee9a58"/><rect x="5.8" y="14.6" width="9.4" height="1.7" fill="#eb9d5c"/><g fill="#e8a060"><rect x="4.6" y="6" width="7.6" height="1.1"/><rect x="4.6" y="9" width="7.6" height="1.1"/><rect x="4.6" y="11.2" width="4.6" height="0.9"/></g></svg>
<div style="position:absolute;left:55px;top:796px;width:1729px;height:52px;background:linear-gradient(#fff 0%, #fff 75%, #f9f9f9 100%);"></div>
<div style="position:absolute;left:80px;top:817.0px;width:10px;height:10px;background:#6bc950;border-radius:2px;"></div>
<svg style="position:absolute;left:538px;top:803.0px;" width="36" height="36" viewBox="0 0 36 36"><circle cx="17" cy="17.2" r="16" fill="none" stroke="#d2d2d2" stroke-width="1.2" stroke-dasharray="3.2 2.6"/>
<circle cx="17" cy="13.2" r="3.9" fill="none" stroke="#b8b8b8" stroke-width="1.2"/>
<path d="M10.5 24.5 q0 -6.5 6.5 -6.5 q4 0 5.5 2.5" fill="none" stroke="#b8b8b8" stroke-width="1.2"/>
<circle cx="25.5" cy="26.5" r="6.8" fill="#bdbdbd"/><g stroke="#fff" stroke-width="1.8"><line x1="25.5" y1="22.5" x2="25.5" y2="30.5"/><line x1="21.5" y1="26.5" x2="29.5" y2="26.5"/></g></svg>
<svg style="position:absolute;left:673.5px;top:811.5px;" width="16" height="21" viewBox="0 0 16 21"><rect x="0.3" y="0" width="1.6" height="19.5" fill="#f50000"/><path d="M1.8 1.8 H14.8 L11.4 6.2 L14.8 10.6 H1.8 Z" fill="#f50000"/></svg>
<div style="position:absolute;left:1118px;top:796px;width:245px;height:52px;background:linear-gradient(rgba(0,0,0,0) 70%, rgba(0,0,0,0.035) 100%), #6bc950;"></div>
<div style="position:absolute;left:1364px;top:796px;width:184px;height:50px;background:#af7e2e;"></div>
<div style="position:absolute;left:1549px;top:796px;width:232px;height:50px;background:#81b1ff;"></div>
<svg style="position:absolute;left:1193px;top:815.0px;" width="14" height="17" viewBox="0 0 14 17"><path d="M1.8 1.6 Q2.8 0.4 3.9 1.4 L6 4.6 V1.7 Q6.5 0 7.6 0 Q8.6 0 9 1.3 L9.3 2.7 Q9.9 1.6 10.8 1.6 Q11.8 1.7 11.8 3 V13 Q11.8 14.5 10.5 14.5 H2.6 Q1.2 14.5 1.2 13 Q1.2 11.5 0.3 11 Q0.3 8 3 6 L4.1 5.3 Z" fill="#fdd23a"/><path d="M3.3 2 L5 5.3" stroke="#f0a830" stroke-width="0.9"/><circle cx="4.8" cy="10.7" r="2" fill="#6bc950"/></svg>
<svg style="position:absolute;left:1406px;top:813.1px;" width="16" height="17" viewBox="0 0 16 17"><rect x="2.5" y="0.6" width="11.6" height="15.6" rx="1" fill="#fddfa6"/><path d="M0.2 1.6 Q1.2 0.2 2.8 0.6 V2.2 Z" fill="#ee9a58"/><rect x="5.8" y="14.6" width="9.4" height="1.7" fill="#eb9d5c"/><g fill="#e8a060"><rect x="4.6" y="6" width="7.6" height="1.1"/><rect x="4.6" y="9" width="7.6" height="1.1"/><rect x="4.6" y="11.2" width="4.6" height="0.9"/></g></svg>
<div style="position:absolute;left:122.50px;top:22.65px;font-size:20.5px;line-height:20.5px;font-weight:400;color:#1f2129;letter-spacing:0.000px;white-space:nowrap;transform:scaleX(1.0039);transform-origin:0 0;">Website Migration Project Plan</div>
<div style="position:absolute;left:467.50px;top:26.46px;font-size:16px;line-height:16px;font-weight:400;color:#292d34;letter-spacing:-0.013px;white-space:nowrap;">Getting Started Guide</div>
<div style="position:absolute;left:681.00px;top:26.46px;font-size:16px;line-height:16px;font-weight:400;color:#5b71ec;letter-spacing:0.200px;white-space:nowrap;">Project Summary</div>
<div style="position:absolute;left:864.50px;top:26.46px;font-size:16px;line-height:16px;font-weight:400;color:#292d34;letter-spacing:-0.433px;white-space:nowrap;">Progress</div>
<div style="position:absolute;left:983.50px;top:26.46px;font-size:16px;line-height:16px;font-weight:400;color:#292d34;letter-spacing:0.018px;white-space:nowrap;">Timeline</div>
<div style="position:absolute;left:1111.50px;top:26.46px;font-size:16px;line-height:16px;font-weight:400;color:#4b4f57;letter-spacing:-0.297px;white-space:nowrap;">View</div>
<div style="position:absolute;left:1673.50px;top:25.96px;font-size:16px;line-height:16px;font-weight:400;color:#292d34;letter-spacing:-0.498px;white-space:nowrap;">Automate</div>
<div style="position:absolute;left:26.80px;top:78.88px;font-size:15.5px;line-height:15.5px;font-weight:400;color:#a9abb0;letter-spacing:0.000px;white-space:nowrap;transform:scaleX(0.8779);transform-origin:0 0;">Search tasks...</div>
<div style="position:absolute;left:1303.30px;top:78.88px;font-size:15.5px;line-height:15.5px;font-weight:400;color:#292d34;letter-spacing:-0.591px;white-space:nowrap;">Filter</div>
<div style="position:absolute;left:1378.30px;top:78.88px;font-size:15.5px;line-height:15.5px;font-weight:400;color:#5b73e6;letter-spacing:-0.616px;white-space:nowrap;">Group by: Phase</div>
<div style="position:absolute;left:1529.00px;top:78.88px;font-size:15.5px;line-height:15.5px;font-weight:400;color:#292d34;letter-spacing:-0.852px;white-space:nowrap;">Subtasks</div>
<div style="position:absolute;left:1627.50px;top:78.88px;font-size:15.5px;line-height:15.5px;font-weight:400;color:#6a6e76;letter-spacing:-1.047px;white-space:nowrap;">Me</div>
<div style="position:absolute;left:1691.00px;top:78.88px;font-size:15.5px;line-height:15.5px;font-weight:400;color:#6a6e76;letter-spacing:-0.839px;white-space:nowrap;">Assignees</div>
<div style="position:absolute;left:70.00px;top:138.07px;font-size:20px;line-height:20px;font-weight:400;color:#292d34;letter-spacing:0.262px;white-space:nowrap;">Website Migration Project Plan</div>
<div style="position:absolute;left:393.00px;top:138.80px;font-size:15px;line-height:15px;font-weight:400;color:#b6bac4;letter-spacing:0.000px;white-space:nowrap;transform:scaleX(0.8499);transform-origin:0 0;">+ NEW TASK</div>
<div style="position:absolute;left:489.60px;top:138.80px;font-size:15px;line-height:15px;font-weight:400;color:#b6bac4;letter-spacing:0.000px;white-space:nowrap;transform:scaleX(0.8196);transform-origin:0 0;">HIDE DESCRIPTION</div>
<div style="position:absolute;left:627.00px;top:138.80px;font-size:15px;line-height:15px;font-weight:400;color:#b6bac4;letter-spacing:0.000px;white-space:nowrap;transform:scaleX(0.8753);transform-origin:0 0;">ADD COMMENT</div>
<div style="position:absolute;left:1774.00px;top:139.30px;font-size:15px;line-height:15px;font-weight:400;color:#9ca0a8;letter-spacing:0.000px;white-space:nowrap;transform:scaleX(0.8800);transform-origin:0 0;">HIDE CLOSED</div>
<div style="position:absolute;left:57.00px;top:191.19px;font-size:17.5px;line-height:17.5px;font-weight:400;color:#5c5c5c;letter-spacing:-0.034px;white-space:nowrap;"><b style="color:#4f4f4f">Website Migration</b> is typically done by companies intending to redirect old web pages to new ones. This activity is necessary for the <b style="color:#4f4f4f">Search Engine Optimization (SEO)</b> strategy of a company since migrating from an old</div>
<div style="position:absolute;left:57.00px;top:220.69px;font-size:17.5px;line-height:17.5px;font-weight:400;color:#5c5c5c;letter-spacing:0.002px;white-space:nowrap;">to a new website might affect the overall searchability of that specific website.</div>
<div style="position:absolute;left:86.50px;top:309.53px;font-size:14.5px;line-height:14.5px;font-weight:700;color:#fff;letter-spacing:0.000px;white-space:nowrap;transform:scaleX(0.9177);transform-origin:0 0;">PLANNING</div>
<div style="position:absolute;left:183.70px;top:309.87px;font-size:13.5px;line-height:13.5px;font-weight:700;color:#b5b9c3;letter-spacing:0.000px;white-space:nowrap;transform:scaleX(0.8012);transform-origin:0 0;">10 TASKS</div>
<div style="position:absolute;left:528.20px;top:310.07px;font-size:13.5px;line-height:13.5px;font-weight:700;color:#b1b5bf;letter-spacing:0.000px;white-space:nowrap;transform:scaleX(0.8140);transform-origin:0 0;">ASSIGNEE</div>
<div style="position:absolute;left:654.30px;top:310.07px;font-size:13.5px;line-height:13.5px;font-weight:700;color:#b1b5bf;letter-spacing:0.000px;white-space:nowrap;transform:scaleX(0.8390);transform-origin:0 0;">PRIORITY</div>
<div style="position:absolute;left:772.00px;top:310.07px;font-size:13.5px;line-height:13.5px;font-weight:700;color:#b1b5bf;letter-spacing:0.000px;white-space:nowrap;transform:scaleX(0.8204);transform-origin:0 0;">START DATE</div>
<div style="position:absolute;left:902.70px;top:310.07px;font-size:13.5px;line-height:13.5px;font-weight:700;color:#b1b5bf;letter-spacing:0.000px;white-space:nowrap;transform:scaleX(0.8425);transform-origin:0 0;">DUE DATE</div>
<div style="position:absolute;left:1002.70px;top:310.07px;font-size:13.5px;line-height:13.5px;font-weight:700;color:#b1b5bf;letter-spacing:0.000px;white-space:nowrap;transform:scaleX(0.8544);transform-origin:0 0;">LATEST COMMENT</div>
<div style="position:absolute;left:1205.00px;top:310.07px;font-size:13.5px;line-height:13.5px;font-weight:700;color:#b1b5bf;letter-spacing:0.000px;white-space:nowrap;transform:scaleX(0.8173);transform-origin:0 0;">STATUS</div>
<div style="position:absolute;left:1437.40px;top:310.07px;font-size:13.5px;line-height:13.5px;font-weight:700;color:#b1b5bf;letter-spacing:0.000px;white-space:nowrap;transform:scaleX(0.8083);transform-origin:0 0;">PHASE</div>
<div style="position:absolute;left:1613.00px;top:310.07px;font-size:13.5px;line-height:13.5px;font-weight:700;color:#b1b5bf;letter-spacing:0.000px;white-space:nowrap;transform:scaleX(0.8473);transform-origin:0 0;">DELIVERING TEAM</div>
<div style="position:absolute;left:108.00px;top:351.01px;font-size:17px;line-height:17px;font-weight:400;color:#35383e;letter-spacing:-0.108px;white-space:nowrap;">Comprehensive training plan</div>
<div style="position:absolute;left:775.04px;top:351.30px;font-size:15px;line-height:15px;font-weight:400;color:#3a3d44;letter-spacing:0.000px;white-space:nowrap;transform:scaleX(0.9250);transform-origin:0 0;">Tomorrow</div>
<div style="position:absolute;left:918.04px;top:351.30px;font-size:15px;line-height:15px;font-weight:400;color:#3a3d44;letter-spacing:0.000px;white-space:nowrap;transform:scaleX(0.9250);transform-origin:0 0;">Thu</div>
<div style="position:absolute;left:999.00px;top:344.73px;font-size:14.5px;line-height:14.5px;font-weight:400;color:#3a3d44;letter-spacing:0.000px;white-space:nowrap;transform:scaleX(0.9102);transform-origin:0 0;">Please add notes</div>
<div style="position:absolute;left:999.00px;top:362.23px;font-size:14.5px;line-height:14.5px;font-weight:400;color:#3a3d44;letter-spacing:0.000px;white-space:nowrap;transform:scaleX(0.9100);transform-origin:0 0;">here</div>
<div style="position:absolute;left:1205.00px;top:353.16px;font-size:16px;line-height:16px;font-weight:400;color:#fff;letter-spacing:0.000px;white-space:nowrap;transform:scaleX(0.8719);transform-origin:0 0;">IN PROGRESS</div>
<div style="position:absolute;left:1429.30px;top:352.36px;font-size:16px;line-height:16px;font-weight:400;color:#fff;letter-spacing:0.000px;white-space:nowrap;transform:scaleX(0.9695);transform-origin:0 0;">PLANNING</div>
<div style="position:absolute;left:1621.30px;top:352.36px;font-size:16px;line-height:16px;font-weight:400;color:#fff;letter-spacing:0.000px;white-space:nowrap;transform:scaleX(0.9188);transform-origin:0 0;">TEAM ECHO</div>
<div style="position:absolute;left:108.00px;top:403.51px;font-size:17px;line-height:17px;font-weight:400;color:#35383e;letter-spacing:-0.003px;white-space:nowrap;">Website migration policy documents</div>
<div style="position:absolute;left:788.92px;top:403.80px;font-size:15px;line-height:15px;font-weight:400;color:#3a3d44;letter-spacing:0.000px;white-space:nowrap;transform:scaleX(0.9250);transform-origin:0 0;">Oct 4</div>
<div style="position:absolute;left:913.42px;top:403.80px;font-size:15px;line-height:15px;font-weight:400;color:#3a3d44;letter-spacing:0.000px;white-space:nowrap;transform:scaleX(0.9250);transform-origin:0 0;">Oct 6</div>
<div style="position:absolute;left:999.00px;top:397.73px;font-size:14.5px;line-height:14.5px;font-weight:400;color:#3a3d44;letter-spacing:0.000px;white-space:nowrap;transform:scaleX(0.9102);transform-origin:0 0;">Please add notes</div>
<div style="position:absolute;left:999.00px;top:415.23px;font-size:14.5px;line-height:14.5px;font-weight:400;color:#3a3d44;letter-spacing:0.000px;white-space:nowrap;transform:scaleX(0.9100);transform-origin:0 0;">here</div>
<div style="position:absolute;left:1205.00px;top:405.66px;font-size:16px;line-height:16px;font-weight:400;color:#fff;letter-spacing:0.000px;white-space:nowrap;transform:scaleX(0.8719);transform-origin:0 0;">IN PROGRESS</div>
<div style="position:absolute;left:1429.30px;top:404.86px;font-size:16px;line-height:16px;font-weight:400;color:#fff;letter-spacing:0.000px;white-space:nowrap;transform:scaleX(0.9695);transform-origin:0 0;">PLANNING</div>
<div style="position:absolute;left:1611.15px;top:404.86px;font-size:16px;line-height:16px;font-weight:400;color:#fff;letter-spacing:0.000px;white-space:nowrap;transform:scaleX(0.9108);transform-origin:0 0;">TEAM CHARLIE</div>
<div style="position:absolute;left:108.00px;top:456.01px;font-size:17px;line-height:17px;font-weight:400;color:#35383e;letter-spacing:-0.127px;white-space:nowrap;">Project delivery structure</div>
<div style="position:absolute;left:788.92px;top:456.30px;font-size:15px;line-height:15px;font-weight:400;color:#3a3d44;letter-spacing:0.000px;white-space:nowrap;transform:scaleX(0.9250);transform-origin:0 0;">Oct 4</div>
<div style="position:absolute;left:909.56px;top:456.30px;font-size:15px;line-height:15px;font-weight:400;color:#5cc84a;letter-spacing:0.000px;white-space:nowrap;transform:scaleX(0.9250);transform-origin:0 0;">Oct 12</div>
<div style="position:absolute;left:999.00px;top:449.73px;font-size:14.5px;line-height:14.5px;font-weight:400;color:#3a3d44;letter-spacing:0.000px;white-space:nowrap;transform:scaleX(0.9102);transform-origin:0 0;">Please add notes</div>
<div style="position:absolute;left:999.00px;top:467.23px;font-size:14.5px;line-height:14.5px;font-weight:400;color:#3a3d44;letter-spacing:0.000px;white-space:nowrap;transform:scaleX(0.9100);transform-origin:0 0;">here</div>
<div style="position:absolute;left:1220.20px;top:458.16px;font-size:16px;line-height:16px;font-weight:400;color:#fff;letter-spacing:0.000px;white-space:nowrap;transform:scaleX(0.8696);transform-origin:0 0;">BLOCKED</div>
<div style="position:absolute;left:1429.30px;top:457.36px;font-size:16px;line-height:16px;font-weight:400;color:#fff;letter-spacing:0.000px;white-space:nowrap;transform:scaleX(0.9695);transform-origin:0 0;">PLANNING</div>
<div style="position:absolute;left:1617.90px;top:457.36px;font-size:16px;line-height:16px;font-weight:400;color:#fff;letter-spacing:0.000px;white-space:nowrap;transform:scaleX(0.9375);transform-origin:0 0;">TEAM ALPHA</div>
<div style="position:absolute;left:108.00px;top:506.01px;font-size:17px;line-height:17px;font-weight:400;color:#35383e;letter-spacing:-0.063px;white-space:nowrap;">Agreement of security restrictions</div>
<div style="position:absolute;left:788.92px;top:506.30px;font-size:15px;line-height:15px;font-weight:400;color:#3a3d44;letter-spacing:0.000px;white-space:nowrap;transform:scaleX(0.9250);transform-origin:0 0;">Oct 4</div>
<div style="position:absolute;left:913.42px;top:506.30px;font-size:15px;line-height:15px;font-weight:400;color:#3a3d44;letter-spacing:0.000px;white-space:nowrap;transform:scaleX(0.9250);transform-origin:0 0;">Oct 7</div>
<div style="position:absolute;left:1227.00px;top:509.36px;font-size:16px;line-height:16px;font-weight:400;color:#2e2e2e;letter-spacing:0.000px;white-space:nowrap;transform:scaleX(0.9270);transform-origin:0 0;">TO DO</div>
<div style="position:absolute;left:1429.30px;top:507.36px;font-size:16px;line-height:16px;font-weight:400;color:#fff;letter-spacing:0.000px;white-space:nowrap;transform:scaleX(0.9695);transform-origin:0 0;">PLANNING</div>
<div style="position:absolute;left:1617.90px;top:507.36px;font-size:16px;line-height:16px;font-weight:400;color:#fff;letter-spacing:0.000px;white-space:nowrap;transform:scaleX(0.9375);transform-origin:0 0;">TEAM ALPHA</div>
<div style="position:absolute;left:108.00px;top:553.51px;font-size:17px;line-height:17px;font-weight:400;color:#35383e;letter-spacing:-0.077px;white-space:nowrap;">Communication logistics</div>
<div style="position:absolute;left:785.06px;top:553.80px;font-size:15px;line-height:15px;font-weight:400;color:#3a3d44;letter-spacing:0.000px;white-space:nowrap;transform:scaleX(0.9250);transform-origin:0 0;">Oct 10</div>
<div style="position:absolute;left:909.56px;top:553.80px;font-size:15px;line-height:15px;font-weight:400;color:#3a3d44;letter-spacing:0.000px;white-space:nowrap;transform:scaleX(0.9250);transform-origin:0 0;">Oct 14</div>
<div style="position:absolute;left:1227.00px;top:556.86px;font-size:16px;line-height:16px;font-weight:400;color:#2e2e2e;letter-spacing:0.000px;white-space:nowrap;transform:scaleX(0.9270);transform-origin:0 0;">TO DO</div>
<div style="position:absolute;left:1429.30px;top:554.86px;font-size:16px;line-height:16px;font-weight:400;color:#fff;letter-spacing:0.000px;white-space:nowrap;transform:scaleX(0.9695);transform-origin:0 0;">PLANNING</div>
<div style="position:absolute;left:1621.30px;top:554.86px;font-size:16px;line-height:16px;font-weight:400;color:#fff;letter-spacing:0.000px;white-space:nowrap;transform:scaleX(0.9188);transform-origin:0 0;">TEAM ECHO</div>
<div style="position:absolute;left:108.00px;top:603.51px;font-size:17px;line-height:17px;font-weight:400;color:#35383e;letter-spacing:-0.186px;white-space:nowrap;">Pre-migration impact assessment</div>
<div style="position:absolute;left:775.04px;top:603.80px;font-size:15px;line-height:15px;font-weight:400;color:#3a3d44;letter-spacing:0.000px;white-space:nowrap;transform:scaleX(0.9250);transform-origin:0 0;">Tomorrow</div>
<div style="position:absolute;left:921.91px;top:603.80px;font-size:15px;line-height:15px;font-weight:400;color:#3a3d44;letter-spacing:0.000px;white-space:nowrap;transform:scaleX(0.9250);transform-origin:0 0;">Fri</div>
<div style="position:absolute;left:999.00px;top:597.73px;font-size:14.5px;line-height:14.5px;font-weight:400;color:#3a3d44;letter-spacing:0.000px;white-space:nowrap;transform:scaleX(0.9102);transform-origin:0 0;">Please add notes</div>
<div style="position:absolute;left:999.00px;top:615.23px;font-size:14.5px;line-height:14.5px;font-weight:400;color:#3a3d44;letter-spacing:0.000px;white-space:nowrap;transform:scaleX(0.9100);transform-origin:0 0;">here</div>
<div style="position:absolute;left:1215.80px;top:606.46px;font-size:16px;line-height:16px;font-weight:400;color:#2e2e2e;letter-spacing:0.000px;white-space:nowrap;transform:scaleX(0.8999);transform-origin:0 0;">IN REVIEW</div>
<div style="position:absolute;left:1429.30px;top:604.86px;font-size:16px;line-height:16px;font-weight:400;color:#fff;letter-spacing:0.000px;white-space:nowrap;transform:scaleX(0.9695);transform-origin:0 0;">PLANNING</div>
<div style="position:absolute;left:1617.90px;top:604.86px;font-size:16px;line-height:16px;font-weight:400;color:#fff;letter-spacing:0.000px;white-space:nowrap;transform:scaleX(0.9082);transform-origin:0 0;">TEAM BRAVO</div>
<div style="position:absolute;left:108.00px;top:656.01px;font-size:17px;line-height:17px;font-weight:400;color:#35383e;letter-spacing:-0.034px;white-space:nowrap;">Website migration project resource matrix</div>
<div style="position:absolute;left:788.92px;top:656.30px;font-size:15px;line-height:15px;font-weight:400;color:#3a3d44;letter-spacing:0.000px;white-space:nowrap;transform:scaleX(0.9250);transform-origin:0 0;">Oct 3</div>
<div style="position:absolute;left:913.42px;top:656.30px;font-size:15px;line-height:15px;font-weight:400;color:#3a3d44;letter-spacing:0.000px;white-space:nowrap;transform:scaleX(0.9250);transform-origin:0 0;">Oct 4</div>
<div style="position:absolute;left:999.00px;top:649.73px;font-size:14.5px;line-height:14.5px;font-weight:400;color:#3a3d44;letter-spacing:0.000px;white-space:nowrap;transform:scaleX(0.9102);transform-origin:0 0;">Please add notes</div>
<div style="position:absolute;left:999.00px;top:667.23px;font-size:14.5px;line-height:14.5px;font-weight:400;color:#3a3d44;letter-spacing:0.000px;white-space:nowrap;transform:scaleX(0.9100);transform-origin:0 0;">here</div>
<div style="position:absolute;left:1215.80px;top:658.96px;font-size:16px;line-height:16px;font-weight:400;color:#2e2e2e;letter-spacing:0.000px;white-space:nowrap;transform:scaleX(0.8999);transform-origin:0 0;">IN REVIEW</div>
<div style="position:absolute;left:1429.30px;top:657.36px;font-size:16px;line-height:16px;font-weight:400;color:#fff;letter-spacing:0.000px;white-space:nowrap;transform:scaleX(0.9695);transform-origin:0 0;">PLANNING</div>
<div style="position:absolute;left:1611.15px;top:657.36px;font-size:16px;line-height:16px;font-weight:400;color:#fff;letter-spacing:0.000px;white-space:nowrap;transform:scaleX(0.9108);transform-origin:0 0;">TEAM CHARLIE</div>
<div style="position:absolute;left:108.00px;top:708.51px;font-size:17px;line-height:17px;font-weight:400;color:#35383e;letter-spacing:-0.101px;white-space:nowrap;">Meeting with sponsors and stakeholders</div>
<div style="position:absolute;left:793.80px;top:708.80px;font-size:15px;line-height:15px;font-weight:400;color:#3a3d44;letter-spacing:0.000px;white-space:nowrap;transform:scaleX(0.9250);transform-origin:0 0;">Tue</div>
<div style="position:absolute;left:915.86px;top:708.80px;font-size:15px;line-height:15px;font-weight:400;color:#5cc84a;letter-spacing:0.000px;white-space:nowrap;transform:scaleX(0.9250);transform-origin:0 0;">Wed</div>
<div style="position:absolute;left:999.00px;top:702.73px;font-size:14.5px;line-height:14.5px;font-weight:400;color:#3a3d44;letter-spacing:0.000px;white-space:nowrap;transform:scaleX(0.9102);transform-origin:0 0;">Please add notes</div>
<div style="position:absolute;left:999.00px;top:720.23px;font-size:14.5px;line-height:14.5px;font-weight:400;color:#3a3d44;letter-spacing:0.000px;white-space:nowrap;transform:scaleX(0.9100);transform-origin:0 0;">here</div>
<div style="position:absolute;left:1214.60px;top:711.46px;font-size:16px;line-height:16px;font-weight:400;color:#fff;letter-spacing:0.000px;white-space:nowrap;transform:scaleX(0.8828);transform-origin:0 0;">COMPLETE</div>
<div style="position:absolute;left:1429.30px;top:709.86px;font-size:16px;line-height:16px;font-weight:400;color:#fff;letter-spacing:0.000px;white-space:nowrap;transform:scaleX(0.9695);transform-origin:0 0;">PLANNING</div>
<div style="position:absolute;left:1617.90px;top:709.86px;font-size:16px;line-height:16px;font-weight:400;color:#fff;letter-spacing:0.000px;white-space:nowrap;transform:scaleX(0.9375);transform-origin:0 0;">TEAM ALPHA</div>
<div style="position:absolute;left:108.00px;top:761.01px;font-size:17px;line-height:17px;font-weight:400;color:#35383e;letter-spacing:-0.017px;white-space:nowrap;">Project team completion</div>
<div style="position:absolute;left:785.06px;top:761.30px;font-size:15px;line-height:15px;font-weight:400;color:#3a3d44;letter-spacing:0.000px;white-space:nowrap;transform:scaleX(0.9250);transform-origin:0 0;">Oct 10</div>
<div style="position:absolute;left:909.56px;top:761.30px;font-size:15px;line-height:15px;font-weight:400;color:#5cc84a;letter-spacing:0.000px;white-space:nowrap;transform:scaleX(0.9250);transform-origin:0 0;">Oct 17</div>
<div style="position:absolute;left:999.00px;top:754.73px;font-size:14.5px;line-height:14.5px;font-weight:400;color:#3a3d44;letter-spacing:0.000px;white-space:nowrap;transform:scaleX(0.9102);transform-origin:0 0;">Please add notes</div>
<div style="position:absolute;left:999.00px;top:772.23px;font-size:14.5px;line-height:14.5px;font-weight:400;color:#3a3d44;letter-spacing:0.000px;white-space:nowrap;transform:scaleX(0.9100);transform-origin:0 0;">here</div>
<div style="position:absolute;left:1214.60px;top:763.96px;font-size:16px;line-height:16px;font-weight:400;color:#fff;letter-spacing:0.000px;white-space:nowrap;transform:scaleX(0.8828);transform-origin:0 0;">COMPLETE</div>
<div style="position:absolute;left:1429.30px;top:762.36px;font-size:16px;line-height:16px;font-weight:400;color:#fff;letter-spacing:0.000px;white-space:nowrap;transform:scaleX(0.9695);transform-origin:0 0;">PLANNING</div>
<div style="position:absolute;left:1620.10px;top:762.36px;font-size:16px;line-height:16px;font-weight:400;color:#fff;letter-spacing:0.000px;white-space:nowrap;transform:scaleX(0.9155);transform-origin:0 0;">TEAM DELTA</div>
<div style="position:absolute;left:108.00px;top:813.51px;font-size:17px;line-height:17px;font-weight:400;color:#35383e;letter-spacing:-0.218px;white-space:nowrap;">Website migration checklist</div>
<div style="position:absolute;left:785.06px;top:813.80px;font-size:15px;line-height:15px;font-weight:400;color:#3a3d44;letter-spacing:0.000px;white-space:nowrap;transform:scaleX(0.9250);transform-origin:0 0;">Oct 10</div>
<div style="position:absolute;left:909.56px;top:813.80px;font-size:15px;line-height:15px;font-weight:400;color:#3a3d44;letter-spacing:0.000px;white-space:nowrap;transform:scaleX(0.9250);transform-origin:0 0;">Oct 17</div>
<div style="position:absolute;left:999.00px;top:807.73px;font-size:14.5px;line-height:14.5px;font-weight:400;color:#3a3d44;letter-spacing:0.000px;white-space:nowrap;transform:scaleX(0.9102);transform-origin:0 0;">Please add notes</div>
<div style="position:absolute;left:999.00px;top:825.23px;font-size:14.5px;line-height:14.5px;font-weight:400;color:#3a3d44;letter-spacing:0.000px;white-space:nowrap;transform:scaleX(0.9100);transform-origin:0 0;">here</div>
<div style="position:absolute;left:1214.60px;top:816.46px;font-size:16px;line-height:16px;font-weight:400;color:#fff;letter-spacing:0.000px;white-space:nowrap;transform:scaleX(0.8828);transform-origin:0 0;">COMPLETE</div>
<div style="position:absolute;left:1429.30px;top:814.86px;font-size:16px;line-height:16px;font-weight:400;color:#fff;letter-spacing:0.000px;white-space:nowrap;transform:scaleX(0.9695);transform-origin:0 0;">PLANNING</div>
<div style="position:absolute;left:1620.10px;top:814.86px;font-size:16px;line-height:16px;font-weight:400;color:#fff;letter-spacing:0.000px;white-space:nowrap;transform:scaleX(0.9155);transform-origin:0 0;">TEAM DELTA</div>

</body></html>
